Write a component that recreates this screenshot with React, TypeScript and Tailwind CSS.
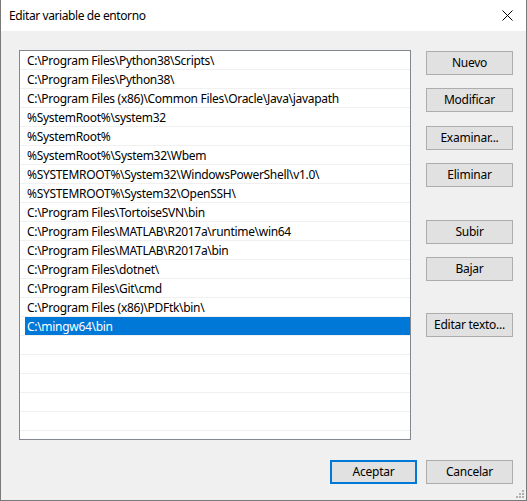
import React from "react";

const paths = [
  "C:\\Program Files\\Python38\\Scripts\\",
  "C:\\Program Files\\Python38\\",
  "C:\\Program Files (x86)\\Common Files\\Oracle\\Java\\javapath",
  "%SystemRoot%\\system32",
  "%SystemRoot%",
  "%SystemRoot%\\System32\\Wbem",
  "%SYSTEMROOT%\\System32\\WindowsPowerShell\\v1.0\\",
  "%SYSTEMROOT%\\System32\\OpenSSH\\",
  "C:\\Program Files\\TortoiseSVN\\bin",
  "C:\\Program Files\\MATLAB\\R2017a\\runtime\\win64",
  "C:\\Program Files\\MATLAB\\R2017a\\bin",
  "C:\\Program Files\\dotnet\\",
  "C:\\Program Files\\Git\\cmd",
  "C:\\Program Files (x86)\\PDFtk\\bin\\",
  "C:\\mingw64\\bin",
];

const Btn: React.FC<{ label: string; className?: string; primary?: boolean }> = ({ label, className, primary }) => (
  <button
    className={
      "w-[87px] h-[24px] bg-[#e1e1e1] text-[12px] tracking-[-0.25px] text-black flex items-center justify-center " +
      (primary ? "border-2 border-[#0078d7] " : "border border-[#adadad] ") +
      (className || "")
    }
  >
    {label}
  </button>
);

export default function App() {
  return (
    <div
      className="w-[527px] h-[501px] flex flex-col bg-[#f0f0f0] border-x border-b border-[#7a7a7a] text-black"
      style={{ fontFamily: '"Noto Sans", "Open Sans", sans-serif' }}
    >
      <div className="h-[31px] bg-white flex items-center justify-between pl-[8px] pr-[13px] shrink-0">
        <span className="text-[12px] tracking-[-0.4px]">Editar variable de entorno</span>
        <svg width="11" height="11" viewBox="0 0 11 11" className="text-black">
          <path d="M0.5 0.5 L10.5 10.5 M10.5 0.5 L0.5 10.5" stroke="currentColor" strokeWidth="1" />
        </svg>
      </div>
      <div className="flex-1 flex flex-col pl-[18px] pr-[13px] pt-[19px] relative">
        <div className="flex gap-[15px]">
          <div className="w-[392px] h-[390px] border border-[#828790] bg-white overflow-hidden flex flex-col">
            {paths.map((p, i) => {
              const sel = i === paths.length - 1;
              return (
                <div key={i} className="h-[19px] shrink-0 border-b border-[#f0f0f0] flex">
                  <div
                    className={
                      "ml-[5px] flex-1 flex items-center pl-[2px] pt-[2px] text-[12px] tracking-[-0.3px] leading-none whitespace-nowrap " +
                      (sel ? "bg-[#0078d7] text-white" : "")
                    }
                  >
                    {p}
                  </div>
                </div>
              );
            })}
            {Array.from({ length: 6 }).map((_, i) => (
              <div key={"e" + i} className="h-[19px] shrink-0 border-b border-[#f0f0f0]" />
            ))}
          </div>
          <div className="flex flex-col pt-px">
            <Btn label="Nuevo" />
            <Btn label="Modificar" className="mt-[13px]" />
            <Btn label="Examinar..." className="mt-[14px]" />
            <Btn label="Eliminar" className="mt-[13px]" />
            <Btn label="Subir" className="mt-[33px]" />
            <Btn label="Bajar" className="mt-[13px]" />
            <Btn label="Editar texto..." className="mt-[32px]" />
          </div>
        </div>
        <div className="flex justify-end gap-[9px] mt-[20px]">
          <Btn label="Aceptar" primary />
          <Btn label="Cancelar" />
        </div>
        <div className="absolute right-[2px] bottom-[2px] grid grid-cols-3 gap-px">
          {[0, 0, 1, 0, 1, 1, 1, 1, 1].map((v, i) => (
            <div key={i} className={"w-[2px] h-[2px] " + (v ? "bg-[#b0b0b0]" : "")} />
          ))}
        </div>
      </div>
    </div>
  );
}
